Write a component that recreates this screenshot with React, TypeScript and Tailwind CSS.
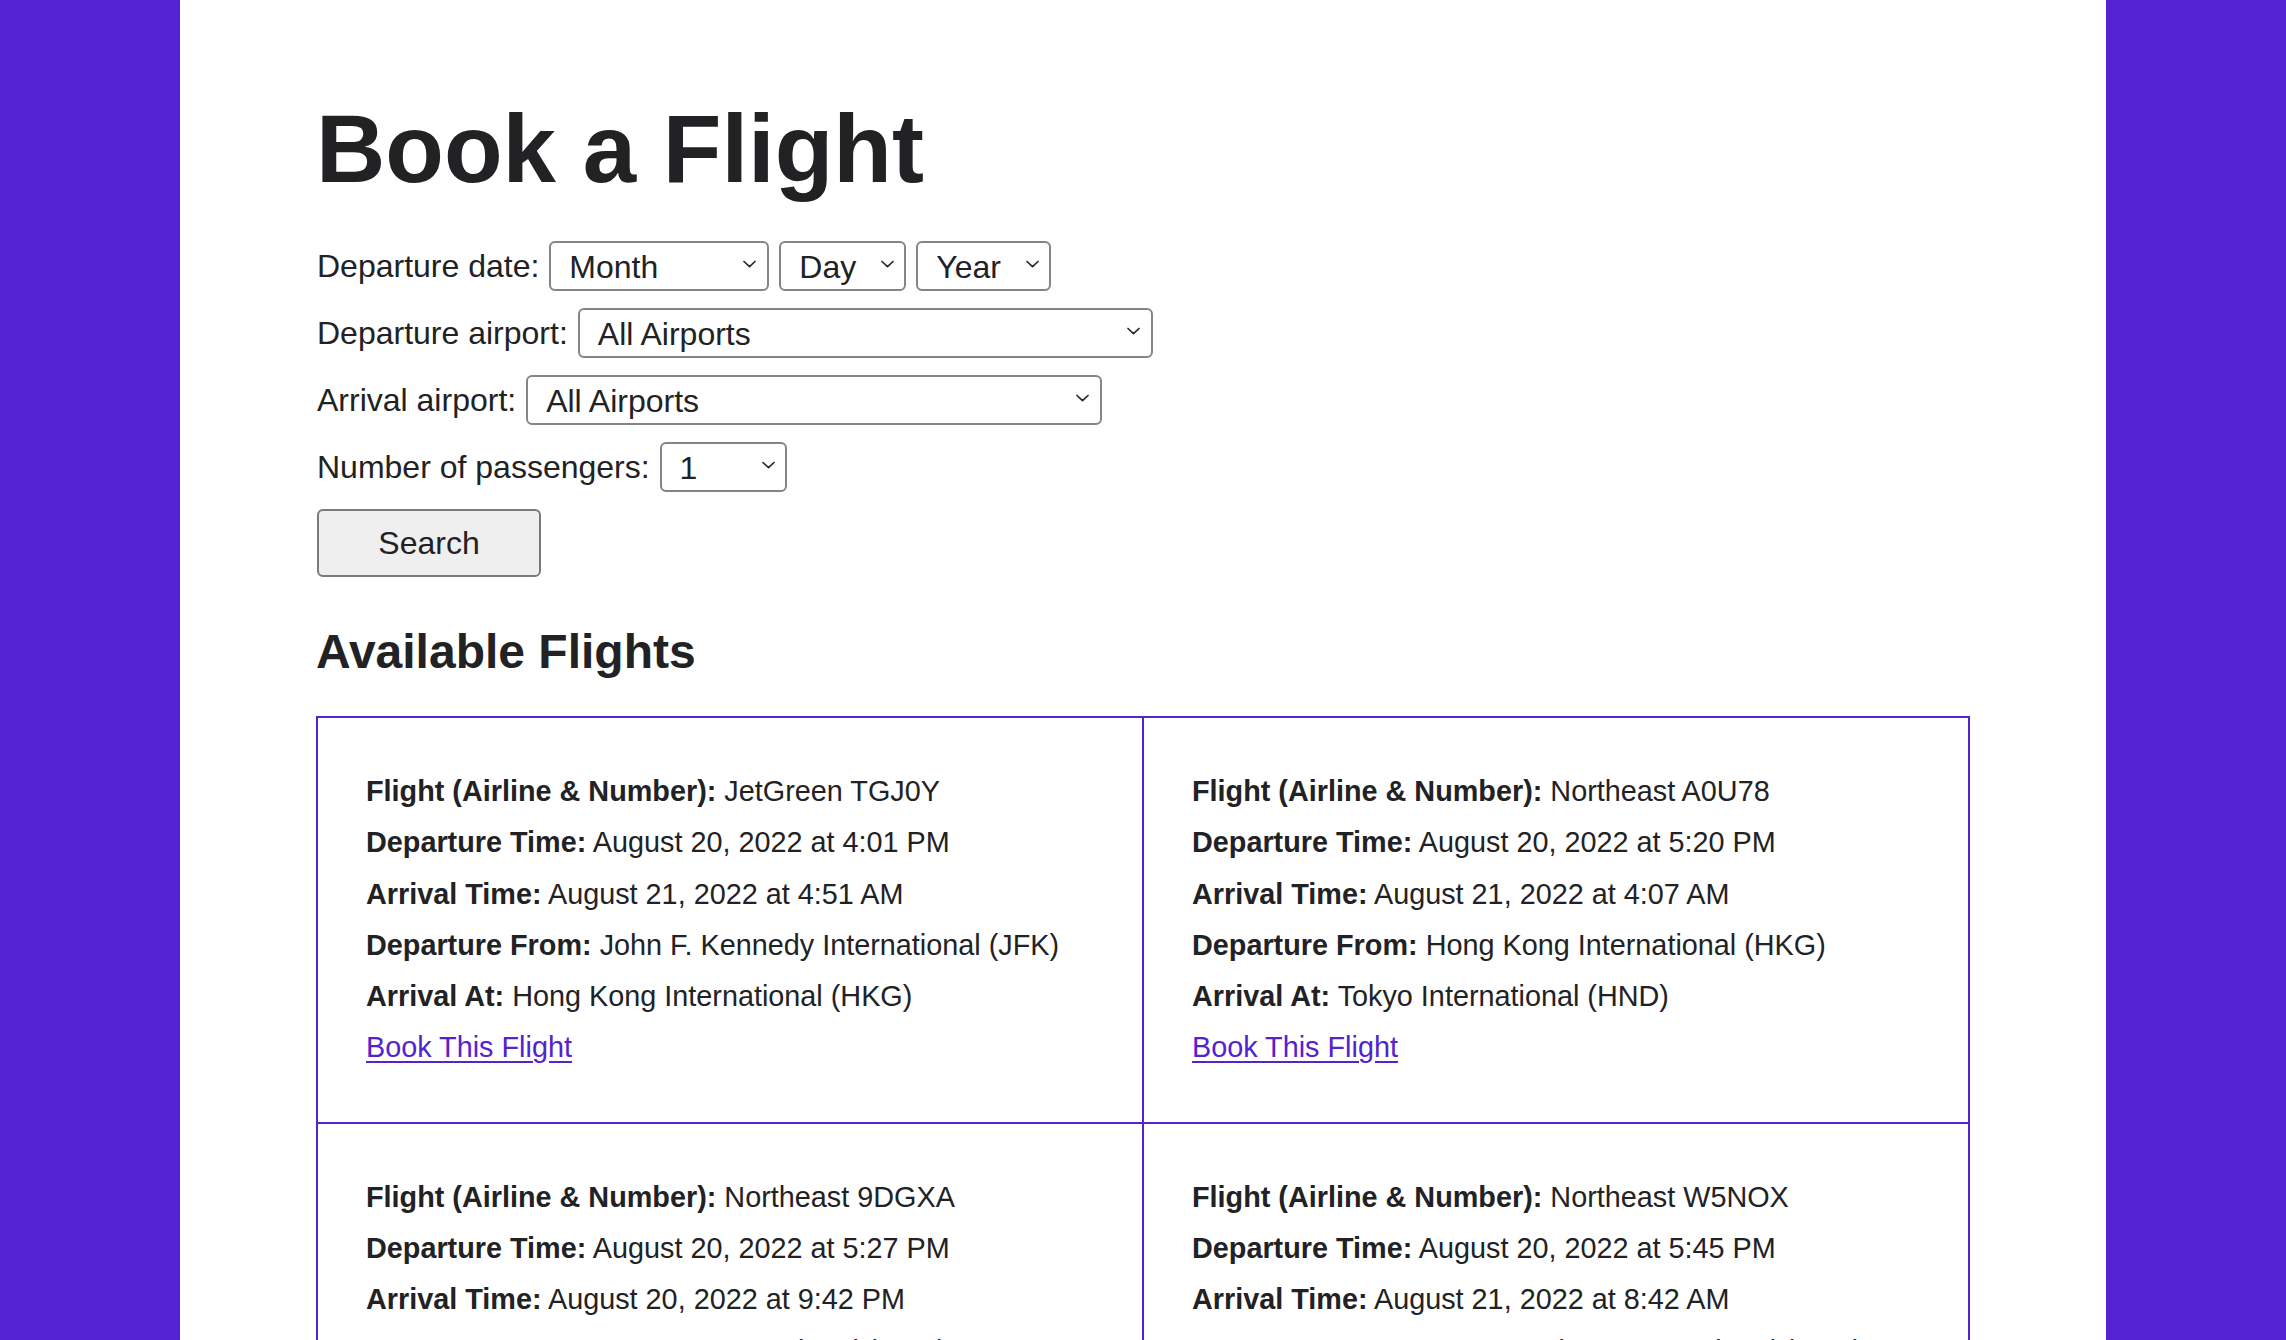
import { ChangeEvent, useState } from 'react';

type Flight = {
  id: string;
  airline: string;
  departureTime: string;
  arrivalTime: string;
  from: string;
  to: string;
};

const flights: Flight[] = [
  {
    id: 'TGJ0Y',
    airline: 'JetGreen TGJ0Y',
    departureTime: 'August 20, 2022 at 4:01 PM',
    arrivalTime: 'August 21, 2022 at 4:51 AM',
    from: 'John F. Kennedy International (JFK)',
    to: 'Hong Kong International (HKG)',
  },
  {
    id: 'A0U78',
    airline: 'Northeast A0U78',
    departureTime: 'August 20, 2022 at 5:20 PM',
    arrivalTime: 'August 21, 2022 at 4:07 AM',
    from: 'Hong Kong International (HKG)',
    to: 'Tokyo International (HND)',
  },
  {
    id: '9DGXA',
    airline: 'Northeast 9DGXA',
    departureTime: 'August 20, 2022 at 5:27 PM',
    arrivalTime: 'August 20, 2022 at 9:42 PM',
    from: 'Denver International (DEN)',
    to: 'John F. Kennedy International (JFK)',
  },
  {
    id: 'W5NOX',
    airline: 'Northeast W5NOX',
    departureTime: 'August 20, 2022 at 5:45 PM',
    arrivalTime: 'August 21, 2022 at 8:42 AM',
    from: 'San Francisco International (SFO)',
    to: 'Hong Kong International (HKG)',
  },
];

const months = ['Month', 'January', 'February', 'March', 'April', 'May', 'June', 'July', 'August', 'September', 'October', 'November', 'December'];
const days = ['Day', ...Array.from({ length: 31 }, (_, i) => String(i + 1))];
const years = ['Year', '2022', '2023'];
const airports = ['All Airports', 'John F. Kennedy International (JFK)', 'Hong Kong International (HKG)', 'Tokyo International (HND)', 'Denver International (DEN)', 'San Francisco International (SFO)'];
const passengers = ['1', '2', '3', '4', '5', '6'];

type SelectProps = {
  options: string[];
  width: string;
  chevronRight: string;
};

const Select = ({ options, width, chevronRight }: SelectProps) => {
  const [value, setValue] = useState(options[0]);
  return (
    <div className={`relative h-[50px] ${width}`}>
      <select
        value={value}
        onChange={(e: ChangeEvent<HTMLSelectElement>) => setValue(e.target.value)}
        className="h-full w-full appearance-none rounded-[6px] border-2 border-[#858585] bg-white pl-[18px] text-[32px] text-[#222225] outline-none"
      >
        {options.map(option => (
          <option key={option}>{option}</option>
        ))}
      </select>
      {/* native-looking chevron */}
      <svg
        className={`pointer-events-none absolute top-[19px] ${chevronRight} h-[8px] w-[13px]`}
        viewBox="0 0 13 8"
        fill="none"
        stroke="#2a2a2a"
        strokeWidth="1.7"
        strokeLinecap="round"
        strokeLinejoin="round"
      >
        <path d="M1 1.5 6.5 6.7 12 1.5" />
      </svg>
    </div>
  );
};

const FormRow = ({ label, children }: { label: string; children: React.ReactNode }) => (
  <div className="flex h-[50px] items-center gap-[10px]">
    <label className="leading-[37px]">{label}</label>
    {children}
  </div>
);

export default function App() {
  return (
    <div className="min-h-screen bg-[#5322d1] font-['Liberation_Sans',Arial,sans-serif] text-[#222225]">
      <div className="mx-auto min-h-screen w-[1926px] bg-white px-[136px] pt-[94px] pb-[80px] text-[32px]">
        <h1 className="text-[96px] font-bold leading-[110px]">Book a Flight</h1>

        <form className="mt-[37px] ml-[1px] flex flex-col items-start gap-[17px]" onSubmit={e => e.preventDefault()}>
          <FormRow label="Departure date:">
            <Select options={months} width="w-[220px]" chevronRight="right-[13px]" />
            <Select options={days} width="w-[127px]" chevronRight="right-[12px]" />
            <Select options={years} width="w-[135px]" chevronRight="right-[12px]" />
          </FormRow>
          <FormRow label="Departure airport:">
            <Select options={airports} width="w-[575px]" chevronRight="right-[13px]" />
          </FormRow>
          <FormRow label="Arrival airport:">
            <Select options={airports} width="w-[576px]" chevronRight="right-[13px]" />
          </FormRow>
          <FormRow label="Number of passengers:">
            <Select options={passengers} width="w-[127px]" chevronRight="right-[12px]" />
          </FormRow>
          <button
            type="submit"
            className="h-[68px] w-[224px] rounded-[6px] border-2 border-[#7a7a7a] bg-[#efefef] text-[32px] text-[#222225]"
          >
            Search
          </button>
        </form>

        <h2 className="mt-[47px] text-[48px] font-bold leading-[55px]">Available Flights</h2>

        <div className="mt-[37px] grid grid-cols-2 border-t-2 border-l-2 border-[#5322d1]">
          {flights.map(flight => (
            <div key={flight.id} className="border-r-2 border-b-2 border-[#5322d1] p-[48px] text-[28.8px] leading-[51.3px]">
              <div>
                <b>Flight (Airline &amp; Number):</b> {flight.airline}
              </div>
              <div>
                <b>Departure Time:</b> {flight.departureTime}
              </div>
              <div>
                <b>Arrival Time:</b> {flight.arrivalTime}
              </div>
              <div>
                <b>Departure From:</b> {flight.from}
              </div>
              <div>
                <b>Arrival At:</b> {flight.to}
              </div>
              <div>
                <a href="#" className="text-[#5322d1] underline underline-offset-[4px]">
                  Book This Flight
                </a>
              </div>
            </div>
          ))}
        </div>
      </div>
    </div>
  );
}
